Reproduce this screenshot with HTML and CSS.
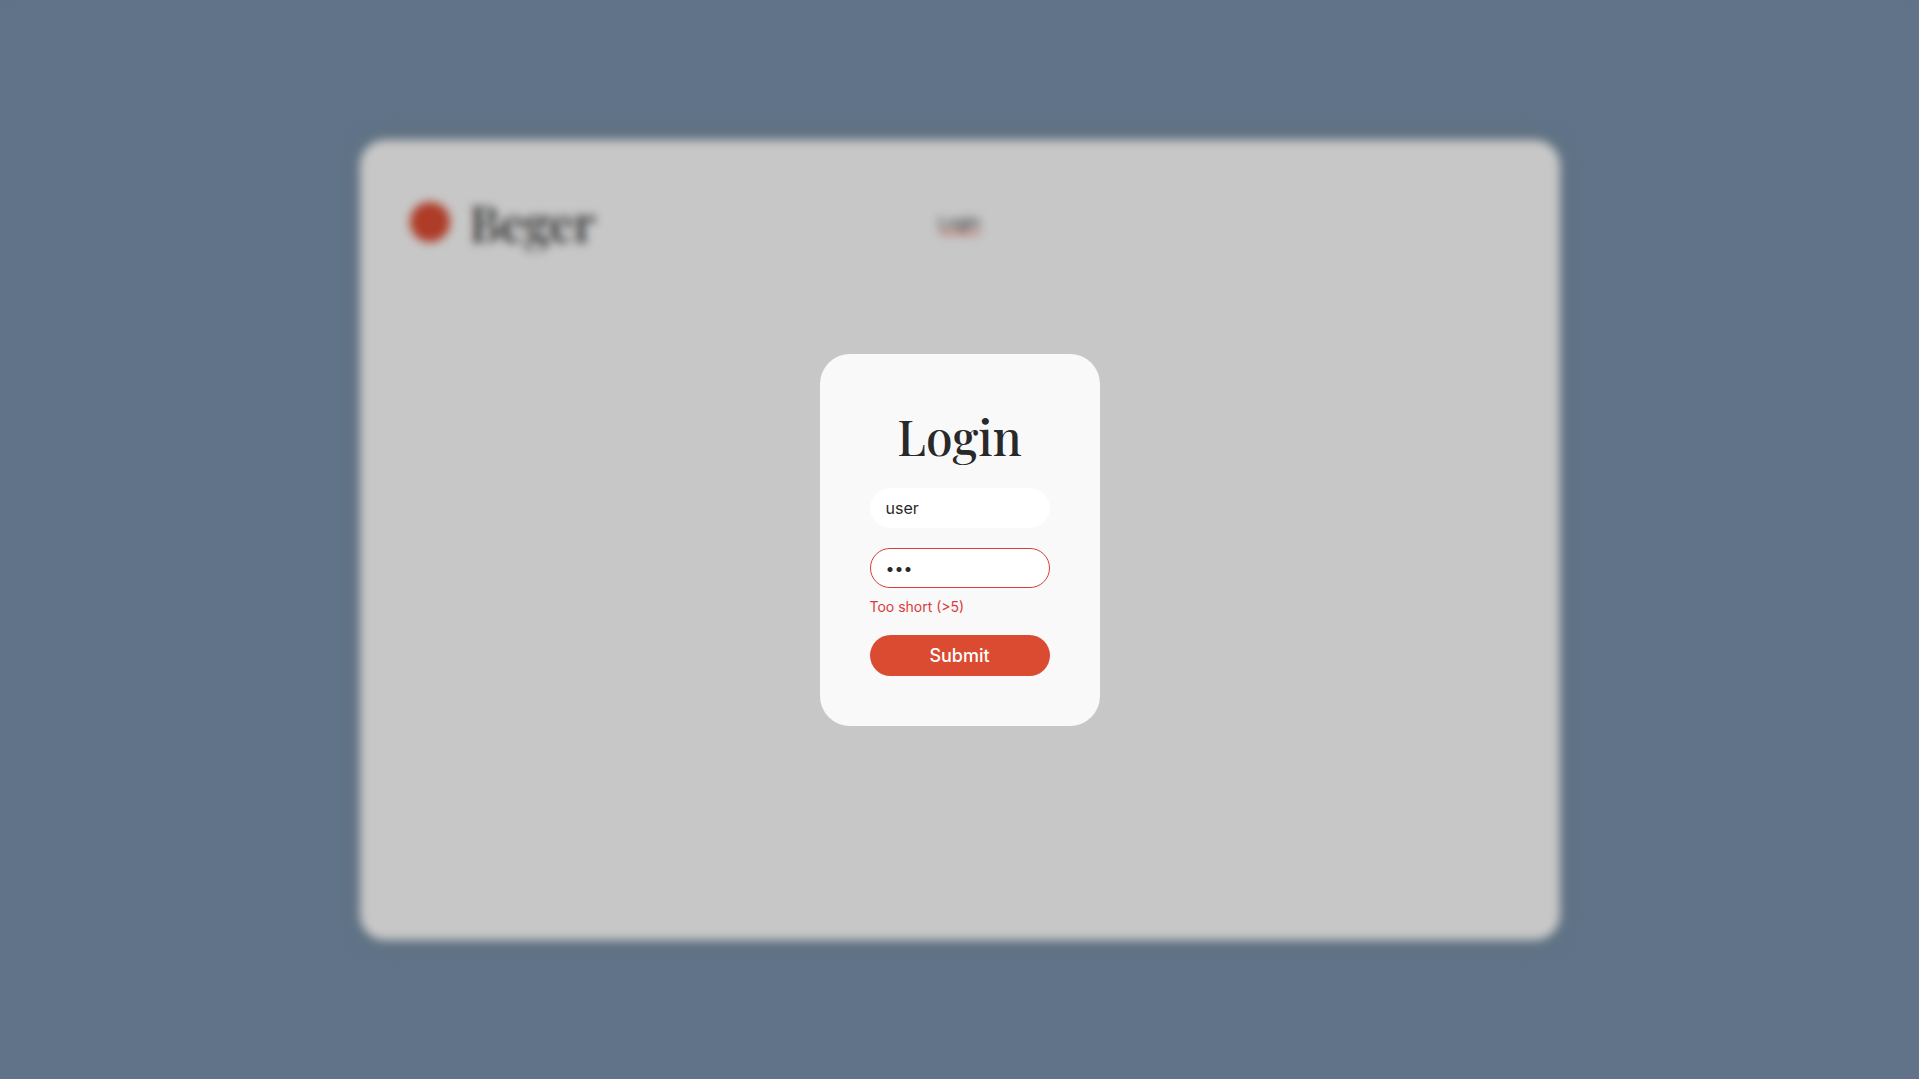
FILE: index.html
```html
<!DOCTYPE html>
<html lang="en">
<head>
<meta charset="utf-8">
<meta name="viewport" content="width=device-width, initial-scale=1">
<title>Beger</title>
<link rel="stylesheet" href="styles.css">
</head>
<body>
<div class="app">
  <header class="header">
    <div class="brand">
      <span class="brand-dot"></span>
      <span class="brand-name">Beger</span>
    </div>
    <nav><a class="nav-link" href="#login">Login</a></nav>
  </header>
</div>
<div class="overlay">
  <form class="modal" id="login" role="dialog" aria-labelledby="login-title">
    <h1 class="title" id="login-title">Login</h1>
    <input class="field" type="text" aria-label="Username" value="user">
    <div class="group">
      <input class="field field-invalid" type="password" aria-label="Password" aria-describedby="password-error" value="abc">
      <p class="error" id="password-error">Too short (&gt;5)</p>
    </div>
    <button class="submit" type="button">Submit</button>
  </form>
</div>
</body>
</html>
```

FILE: styles.css
```css
* {
  box-sizing: border-box;
}

body {
  margin: 0;
  min-height: 100vh;
  display: grid;
  place-items: center;
  background: #7a90aa;
  color: #292929;
  font-family: Inter, "Liberation Sans", sans-serif;
  font-size: 16px;
}

.app {
  width: 100%;
  max-width: 1200px;
  min-height: 800px;
  padding: 50px;
  border-radius: 25px;
  background: #f9f9f9;
  box-shadow: 0 0 20px rgba(121, 145, 140, 0.6);
}

.header {
  display: grid;
  grid-template-columns: 1fr auto 1fr;
  align-items: center;
}

.brand {
  display: flex;
  align-items: center;
  gap: 20px;
}

.brand-dot {
  width: 40px;
  height: 40px;
  border-radius: 50%;
  background: #da4b31;
}

.brand-name {
  font: 500 48px/64px "Playfair Display", "Liberation Serif", serif;
}

.nav-link {
  color: inherit;
  text-decoration: none;
  border-bottom: 2px solid #da4b31;
}

/* The overlay dims and blurs the page behind the dialog. */
.overlay {
  position: fixed;
  inset: 0;
  display: grid;
  place-items: center;
  background: rgba(0, 0, 0, 0.2);
  backdrop-filter: blur(5px);
}

.modal {
  width: 280px;
  padding: 50px;
  display: flex;
  flex-direction: column;
  gap: 20px;
  border-radius: 30px;
  background: #f9f9f9;
}

.title {
  margin: 0;
  text-align: center;
  font: 500 48px/64px "Playfair Display", "Liberation Serif", serif;
}

.field {
  width: 100%;
  height: 40px;
  padding: 0 15px;
  border: 1px solid #fff;
  border-radius: 20px;
  background: #fff;
  color: inherit;
  font: inherit;
}

.field-invalid {
  border-color: #dc3b3b;
}

.group {
  display: flex;
  flex-direction: column;
  gap: 10px;
}

.error {
  margin: 0;
  color: #dc3b3b;
  font-size: 14px;
  line-height: 17px;
}

.submit {
  height: 41px;
  border: 0;
  border-radius: 21px;
  background: #da4b31;
  color: #fff;
  font: 500 18px/21px Inter, "Liberation Sans", sans-serif;
}
```
